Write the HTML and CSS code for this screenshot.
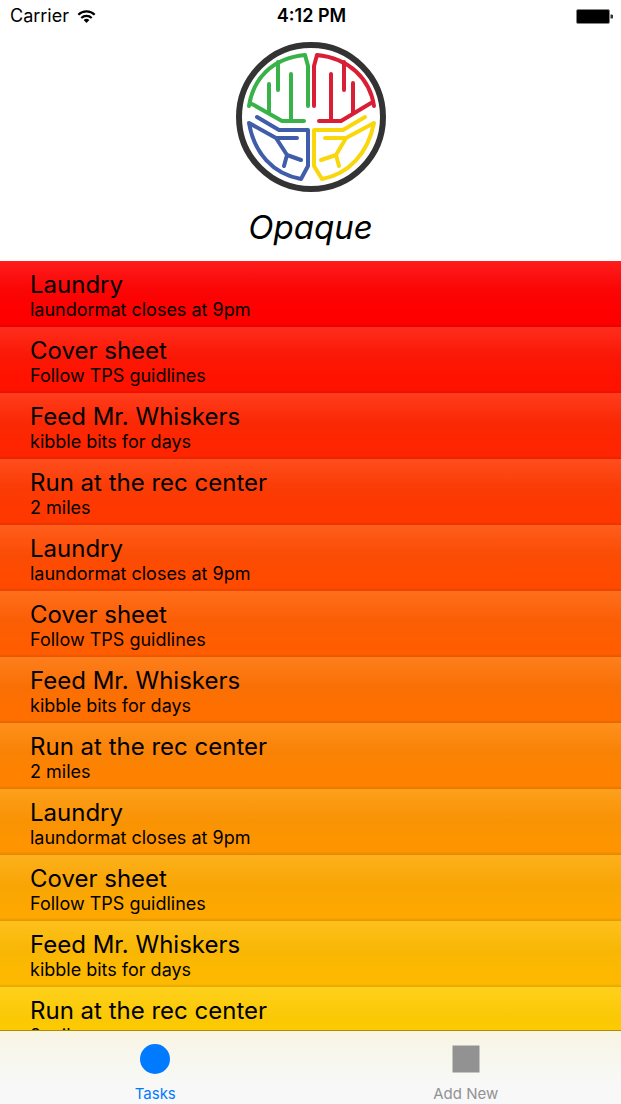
FILE: index.html
```html
<!DOCTYPE html>
<html lang="en">
<head>
<meta charset="utf-8">
<meta name="viewport" content="width=device-width, initial-scale=1">
<title>Opaque</title>
<link rel="stylesheet" href="styles.css">
</head>
<body>
<div class="app">
  <div class="status">
    <div class="status-left">
      <span>Carrier</span>
      <svg class="wifi" viewBox="0 0 20 14" aria-hidden="true">
        <g fill="none" stroke="#000" stroke-width="2.3">
          <path d="M1.2 5.2a12.4 12.4 0 0 1 17.6 0"/>
          <path d="M4.4 8.6a7.9 7.9 0 0 1 11.2 0"/>
        </g>
        <path d="M10 14 6.9 10.9a4.4 4.4 0 0 1 6.2 0z"/>
      </svg>
    </div>
    <time class="clock">4:12 PM</time>
    <div class="status-right">
      <svg class="battery" viewBox="0 0 37 15" aria-hidden="true">
        <rect x=".5" y=".5" width="33" height="14" rx="1.5" fill="#000" stroke="#858585"/>
        <path d="M34.5 5.5h1a1.5 1.5 0 0 1 0 4h-1z" fill="#333"/>
      </svg>
    </div>
  </div>
  <header class="header">
    <svg class="logo" viewBox="0 0 150 150" role="img" aria-label="Opaque logo">
      <circle cx="75" cy="75" r="72" fill="#fff" stroke="#333" stroke-width="6"/>
      <g fill="none" stroke-width="4" stroke-linecap="round" stroke-linejoin="round">
        <g stroke="#39b24a">
          <path d="M72 64V24L69 13C36 16 17 37 13 64"/>
          <path d="M16 62 46 79H68M33 71V42M42 48V20M55 78V32"/>
        </g>
        <g stroke="#d91f35">
          <path d="M78 64V24L81 13C113 16 134 37 138 64"/>
          <path d="M135 61 105 79H83M117 71V41M108 48V20M95 78V32"/>
        </g>
        <g stroke="#405daa">
          <path d="M21 75 43 88H72V124L65 137C37 132 18 111 13 81L40 96H61M40 96 51 113 65 118M51 113 48 124"/>
        </g>
        <g stroke="#f9d70c">
          <path d="M129 75 107 88H78V124L86 137C113 132 132 111 138 81L110 96H89M110 96 100 113 85 118M100 113 103 124"/>
        </g>
      </g>
    </svg>
    <h1 class="title">Opaque</h1>
  </header>
  <main class="main">
    <ul class="tasks">
      <li class="task"><h2 class="task-name">Laundry</h2><p class="task-note">laundormat closes at 9pm</p></li>
      <li class="task"><h2 class="task-name">Cover sheet</h2><p class="task-note">Follow TPS guidlines</p></li>
      <li class="task"><h2 class="task-name">Feed Mr. Whiskers</h2><p class="task-note">kibble bits for days</p></li>
      <li class="task"><h2 class="task-name">Run at the rec center</h2><p class="task-note">2 miles</p></li>
      <li class="task"><h2 class="task-name">Laundry</h2><p class="task-note">laundormat closes at 9pm</p></li>
      <li class="task"><h2 class="task-name">Cover sheet</h2><p class="task-note">Follow TPS guidlines</p></li>
      <li class="task"><h2 class="task-name">Feed Mr. Whiskers</h2><p class="task-note">kibble bits for days</p></li>
      <li class="task"><h2 class="task-name">Run at the rec center</h2><p class="task-note">2 miles</p></li>
      <li class="task"><h2 class="task-name">Laundry</h2><p class="task-note">laundormat closes at 9pm</p></li>
      <li class="task"><h2 class="task-name">Cover sheet</h2><p class="task-note">Follow TPS guidlines</p></li>
      <li class="task"><h2 class="task-name">Feed Mr. Whiskers</h2><p class="task-note">kibble bits for days</p></li>
      <li class="task"><h2 class="task-name">Run at the rec center</h2><p class="task-note">2 miles</p></li>
    </ul>
  </main>
  <nav class="tabs">
    <button class="tab tab-active" type="button">
      <svg class="tab-icon" viewBox="0 0 30 30" aria-hidden="true"><circle cx="15" cy="15" r="15" fill="currentColor"/></svg>
      <span>Tasks</span>
    </button>
    <button class="tab" type="button">
      <svg class="tab-icon" viewBox="0 0 30 30" aria-hidden="true"><path d="M1.5 1.5h27v27h-27z" fill="currentColor"/></svg>
      <span>Add New</span>
    </button>
  </nav>
</div>
</body>
</html>
```
FILE: styles.css
```css
* {
  box-sizing: border-box;
}

body {
  margin: 0;
  background: #fff;
  color: #000;
  font-family: Inter, "Liberation Sans", sans-serif;
}

h1, h2, p, ul {
  margin: 0;
  padding: 0;
  font-weight: 400;
}

.app {
  display: flex;
  flex-direction: column;
  height: 100vh;
}

.status {
  display: grid;
  grid-template-columns: 1fr auto 1fr;
  align-items: center;
  height: 32px;
  padding: 0 8px 0 10px;
  font-size: 18px;
  line-height: 32px;
}

.status-left {
  display: flex;
  align-items: center;
  gap: 8px;
}

.status-right {
  display: flex;
  justify-content: flex-end;
}

.wifi {
  width: 19px;
  height: 13px;
}

.clock {
  font-weight: 600;
}

.battery {
  width: 37px;
  height: 15px;
}

.header {
  display: flex;
  flex-direction: column;
  align-items: center;
  gap: 13px;
  padding: 10px 0 12px;
}

.logo {
  width: 150px;
  height: 150px;
}

.title {
  font-size: 33px;
  font-style: italic;
  line-height: 44px;
}

.main {
  flex: 1;
  min-height: 0;
  overflow: hidden;
}

.tasks {
  list-style: none;
}

.task {
  height: 66px;
  padding: 8px 30px 0;
  background-image: linear-gradient(
    rgba(255, 255, 255, 0.11),
    rgba(128, 128, 128, 0.04) 45%,
    rgba(0, 0, 0, 0) 75%,
    rgba(0, 0, 0, 0) 95%,
    rgba(0, 0, 0, 0.1)
  );
}

.task:nth-child(1) { background-color: #ff0000; }
.task:nth-child(2) { background-color: #ff1300; }
.task:nth-child(3) { background-color: #ff2500; }
.task:nth-child(4) { background-color: #ff3800; }
.task:nth-child(5) { background-color: #ff4a00; }
.task:nth-child(6) { background-color: #ff5d00; }
.task:nth-child(7) { background-color: #fe6f00; }
.task:nth-child(8) { background-color: #fe8200; }
.task:nth-child(9) { background-color: #fd9400; }
.task:nth-child(10) { background-color: #fda700; }
.task:nth-child(11) { background-color: #fdb900; }
.task:nth-child(12) { background-color: #ffcb00; }

.task-name {
  font-size: 24px;
  line-height: 31px;
}

.task-note {
  font-size: 18px;
  line-height: 19px;
}

.tabs {
  display: grid;
  grid-template-columns: 1fr 1fr;
  height: 74px;
  border-top: 1px solid #ad8c08;
  background: linear-gradient(#f9f4e3, #f7f7ee 35%, #f8f8f8 75%);
}

.tab {
  display: flex;
  flex-direction: column;
  align-items: center;
  gap: 10px;
  padding: 13px 0 0;
  border: 0;
  background: none;
  color: #929292;
  font-family: inherit;
  font-size: 15px;
  line-height: 20px;
}

.tab-active {
  color: #007aff;
}

.tab-icon {
  width: 30px;
  height: 30px;
}
```
